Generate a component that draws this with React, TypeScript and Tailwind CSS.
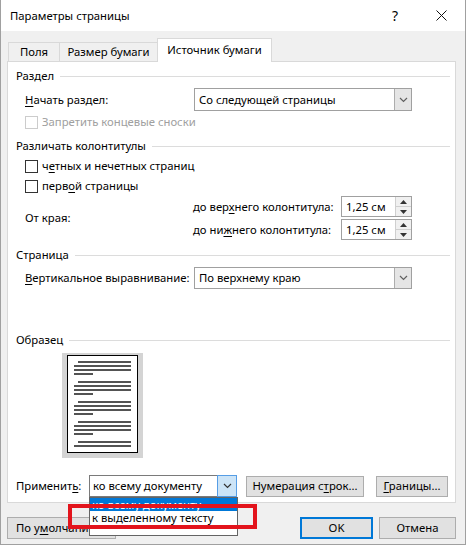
import React from "react";

const U = ({ children }: { children: React.ReactNode }) => (
  <span className="underline underline-offset-[2px] decoration-[1px]">{children}</span>
);

function Checkbox({ disabled }: { disabled?: boolean }) {
  return (
    <div
      className={
        disabled
          ? "w-[13px] h-[13px] bg-white border border-[#cccccc]"
          : "w-[13px] h-[13px] bg-white border border-[#333333]"
      }
    />
  );
}

function Group({ title }: { title: string }) {
  return (
    <div className="flex items-center h-[16px] pr-[5px]">
      <span className="leading-none">{title}</span>
      <div className="flex-1 h-px bg-[#dcdcdc] ml-[6px]" />
    </div>
  );
}

function Chevron({ color = "#606060" }: { color?: string }) {
  return (
    <svg width="9" height="6" viewBox="0 0 9 6">
      <path d="M1 1 L4.5 4.5 L8 1" fill="none" stroke={color} strokeWidth="1.2" />
    </svg>
  );
}

function Select({ value, className }: { value: string; className: string }) {
  return (
    <div className={"flex bg-white border border-[#a0a0a0] " + className}>
      <div className="flex-1 flex items-center pl-[4px] leading-none">{value}</div>
      <div className="w-[17px] h-full bg-[#e5e5e5] border-l border-[#adadad] flex items-center justify-center">
        <Chevron />
      </div>
    </div>
  );
}

function Spin({ value }: { value: string }) {
  return (
    <div className="flex w-[71px] h-[21px] bg-white border border-[#a0a0a0]">
      <div className="flex-1 flex items-center pl-[4px] leading-none">{value}</div>
      <div className="w-[16px] h-full flex flex-col bg-[#f0f0f0] border-l border-[#cfcfcf]">
        <div className="flex-1 flex items-center justify-center border-b border-[#cfcfcf]">
          <svg width="7" height="4" viewBox="0 0 7 4">
            <path d="M0 4 L3.5 0 L7 4 Z" fill="#333" />
          </svg>
        </div>
        <div className="flex-1 flex items-center justify-center">
          <svg width="7" height="4" viewBox="0 0 7 4">
            <path d="M0 0 L3.5 4 L7 0 Z" fill="#333" />
          </svg>
        </div>
      </div>
    </div>
  );
}

function Button({ children, className }: { children: React.ReactNode; className: string }) {
  return (
    <div
      className={
        "h-[21px] bg-[#e1e1e1] border border-[#adadad] flex items-center justify-center leading-none " +
        className
      }
    >
      {children}
    </div>
  );
}

function Preview() {
  const groups = [7, 27, 47, 67, 87];
  const lines: React.ReactNode[] = [];
  groups.forEach((g, gi) => {
    lines.push(<line key={gi + "a"} x1={11} x2={64} y1={g} y2={g} />);
    lines.push(<line key={gi + "b"} x1={7} x2={64} y1={g + 4} y2={g + 4} />);
    if (gi < 4) {
      lines.push(<line key={gi + "c"} x1={7} x2={64} y1={g + 8} y2={g + 8} />);
      lines.push(<line key={gi + "d"} x1={7} x2={26} y1={g + 12} y2={g + 12} />);
    }
  });
  return (
    <div className="ml-[46px] mt-[5px] w-[81px] h-[105px] bg-[#d4d4d4] pl-[5px] pt-[2px]">
      <div className="w-[71px] h-[98px] bg-white border border-black">
        <svg width="69" height="96" viewBox="1 1 69 96">
          <g stroke="#1a1a1a" strokeWidth="1.5">{lines}</g>
        </svg>
      </div>
    </div>
  );
}

export default function App() {
  return (
    <div className="w-[466px] h-[547px] bg-white font-['Noto_Sans',sans-serif] text-[11.3px] text-black whitespace-nowrap">
      <div className="relative w-[466px] h-[545px] bg-[#f0f0f0] border-l border-r border-b border-[#a0a0a0] flex flex-col">
        {/* Title bar */}
        <div className="h-[31px] bg-white flex items-center">
          <span className="pl-[9px] leading-none">Параметры страницы</span>
          <div className="ml-auto w-[30px] flex justify-center text-[14px] leading-none">?</div>
          <div className="ml-[16px] mr-[9px] w-[30px] flex justify-center">
            <svg width="11" height="11" viewBox="0 0 11 11">
              <path d="M0.5 0.5 L10.5 10.5 M10.5 0.5 L0.5 10.5" stroke="#111" strokeWidth="1" />
            </svg>
          </div>
        </div>

        {/* Tabs */}
        <div className="relative z-10 mt-[7px] ml-[7px] -mb-px flex items-end h-[24px]">
          <div className="w-[52px] h-[20px] bg-[#f0f0f0] border border-[#d9d9d9] flex items-center justify-center leading-none">
            Поля
          </div>
          <div className="-ml-px w-[99px] h-[20px] bg-[#f0f0f0] border border-[#d9d9d9] flex items-center justify-center leading-none">
            Размер бумаги
          </div>
          <div className="-ml-px w-[115px] h-[24px] bg-white border-t border-l border-r border-[#d9d9d9] flex items-center justify-center leading-none pb-[2px]">
            Источник бумаги
          </div>
        </div>

        {/* Panel */}
        <div className="ml-[6px] w-[449px] bg-white border border-[#d9d9d9] pl-[8px] pb-[5px] flex flex-col">
          <div className="mt-[6px]">
            <Group title="Раздел" />
          </div>
          <div className="mt-[4px] pl-[9px] flex items-center">
            <span className="w-[169px] leading-none">
              <U>Н</U>ачать раздел:
            </span>
            <Select value="Со следующей страницы" className="w-[218px] h-[23px]" />
          </div>
          <div className="mt-[4px] pl-[9px] flex items-center h-[14px] gap-[4px] text-[#a0a0a0]">
            <Checkbox disabled />
            <span className="leading-none">Запретить концевые сноски</span>
          </div>

          <div className="mt-[9px]">
            <Group title="Различать колонтитулы" />
          </div>
          <div className="mt-[5px] pl-[9px] flex items-center h-[14px] gap-[4px]">
            <Checkbox />
            <span className="leading-none">
              ч<U>е</U>тных и нечетных страниц
            </span>
          </div>
          <div className="mt-[6px] pl-[9px] flex items-center h-[14px] gap-[4px]">
            <Checkbox />
            <span className="leading-none">
              перв<U>о</U>й страницы
            </span>
          </div>
          <div className="mt-[3px] pl-[9px] flex items-center">
            <span className="w-[168px] leading-none">От края:</span>
            <div className="flex flex-col gap-[2px]">
              <div className="flex items-center">
                <span className="w-[148px] leading-none">
                  до вер<U>х</U>него колонтитула:
                </span>
                <Spin value="1,25 см" />
              </div>
              <div className="flex items-center">
                <span className="w-[148px] leading-none">
                  до ни<U>ж</U>него колонтитула:
                </span>
                <Spin value="1,25 см" />
              </div>
            </div>
          </div>

          <div className="mt-[7px]">
            <Group title="Страница" />
          </div>
          <div className="mt-[4px] pl-[9px] flex items-center">
            <span className="w-[169px] leading-none">
              <U>В</U>ертикальное выравнивание:
            </span>
            <Select value="По верхнему краю" className="w-[218px] h-[22px]" />
          </div>

          <div className="mt-[43px]">
            <Group title="Образец" />
          </div>
          <Preview />

          <div className="mt-[17px] flex items-center">
            <span className="w-[73px] leading-none">
              Применит<U>ь</U>:
            </span>
            <div className="flex w-[148px] h-[22px] bg-white border border-[#7a7a7a]">
              <div className="flex-1 flex items-center pl-[3px] leading-none">ко всему документу</div>
              <div className="w-[18px] h-full bg-[#cce4f7] border border-[#569de5] -my-px -mr-px box-content flex items-center justify-center">
                <Chevron color="#333" />
              </div>
            </div>
            <Button className="ml-[9px] w-[118px]">
              <span>
                Нумерация с<U>т</U>рок...
              </span>
            </Button>
            <Button className="ml-[12px] w-[72px]">
              <span>
                <U>Г</U>раницы...
              </span>
            </Button>
          </div>
        </div>

        {/* Bottom buttons */}
        <div className="mt-[14px] flex items-center">
          <Button className="ml-[6px] px-[8px] h-[22px]">
            <span>
              По у<U>м</U>олчанию...
            </span>
          </Button>
          <div className="ml-auto w-[73px] h-[22px] bg-[#e1e1e1] border-2 border-[#0078d7] flex items-center justify-center leading-none">
            OK
          </div>
          <Button className="ml-[6px] mr-[9px] w-[77px] h-[22px]">Отмена</Button>
        </div>

        {/* Open dropdown list */}
        <div className="absolute left-[88px] top-[497px] w-[149px] h-[39px] bg-white border border-[#646464] flex flex-col z-20">
          <div className="h-[13px] bg-[#0078d7] text-white flex items-center pl-[2px] leading-none">
            ко всему документу
          </div>
          <div className="h-[14px] flex items-center pl-[2px] leading-none">к выделенному тексту</div>
        </div>

        {/* Red highlight */}
        <div className="absolute left-[67px] top-[504px] w-[189px] h-[25px] border-4 border-[#e3141c] z-30" />
      </div>
    </div>
  );
}
